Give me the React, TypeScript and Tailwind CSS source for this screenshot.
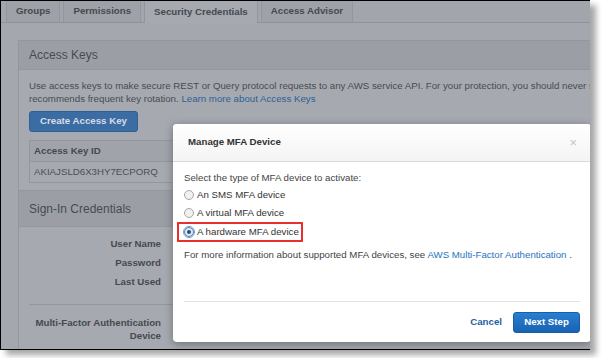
import { useState } from 'react'

const tabs = ['Groups', 'Permissions', 'Security Credentials', 'Access Advisor']
const opts = ['An SMS MFA device', 'A virtual MFA device', 'A hardware MFA device']

function Radio({ on }: { on: boolean }) {
  return (
    <span className={`w-[10px] h-[10px] rounded-full border flex items-center justify-center shrink-0 ${on ? 'border-[#5a7fa8] bg-[#dfe8f2] outline outline-1 outline-[#6aa0d8]' : 'border-[#a8a8a8] bg-[#f0f0f0]'}`}>
      {on && <span className="w-[4px] h-[4px] rounded-full bg-[#2b4e78]" />}
    </span>
  )
}

export default function App() {
  const [sel, setSel] = useState(2)

  return (
    <div className="w-[602px] h-[358px] bg-white relative overflow-hidden" style={{ fontFamily: '"Liberation Sans", Arial, sans-serif' }}>
      <div className="w-[590px] h-[350px] border-l border-t border-b border-black bg-[#a4a8ae] relative overflow-hidden shadow-[6px_5px_6px_rgba(0,0,0,0.35)] flex flex-col">
        {/* tabs */}
        <div className="h-[22px] flex items-end pl-[5px] gap-[3px] border-b border-[#8f9399] bg-[#a2a6ac]">
          {tabs.map((t, i) => (
            <div
              key={t}
              className={`h-[22px] px-[9px] flex items-center text-[9.7px] font-bold text-[#45494f] border-x border-t border-[#93979d] whitespace-nowrap ${i === 2 ? 'bg-[#a6aab0] -mb-px h-[23px]' : 'bg-[#9ea2a8]'}`}
            >
              {t}
            </div>
          ))}
        </div>

        <div className="flex-1 pl-[17px] pt-[17px]">
          <div className="border-l border-t border-[#94989e] bg-[#a6aab0] h-full">
            <div className="h-[29px] bg-[#9b9fa5] border-b border-[#94989e] flex items-center pl-[10px] text-[12px] text-[#474b51]">Access Keys</div>
            <div className="pl-[10px] pt-[9px] pb-[7px]">
              <p className="text-[9.7px] leading-[13px] text-[#474b51] whitespace-nowrap">
                Use access keys to make secure REST or Query protocol requests to any AWS service API. For your protection, you should never share your secret keys with anyone. As a best practice, we<br />
                recommends frequent key rotation. <span className="text-[#2f5f95]">Learn more about Access Keys</span>
              </p>
              <div className="mt-[6px] w-[109px] h-[21px] rounded-[3px] bg-[#3b6ca3] border border-[#325f92] flex items-center justify-center text-[9.7px] font-bold text-[#d7dde4]">Create Access Key</div>
              <div className="mt-[8px] border border-[#94989e] border-r-0">
                <div className="h-[21px] bg-[#a0a4aa] border-b border-[#94989e] flex items-center pl-[4px] text-[9.7px] font-bold text-[#45494f]">Access Key ID</div>
                <div className="h-[20px] flex items-center pl-[4px] text-[9.7px] text-[#4a4e54]">AKIAJSLD6X3HY7ECPORQ</div>
              </div>
            </div>
            <div className="h-[37px] bg-[#9b9fa5] border-y border-[#94989e] flex items-center pl-[10px] text-[12px] text-[#474b51]">Sign-In Credentials</div>
            <div className="pl-[10px] pt-[11px]">
              <div className="w-[132px] flex flex-col items-end gap-[7px] text-[9.7px] font-bold text-[#45494f] leading-[12px]">
                <span>User Name</span>
                <span>Password</span>
                <span>Last Used</span>
              </div>
              <div className="mt-[16px] border-t border-[#94989e]" />
              <div className="w-[132px] pt-[11px] text-right text-[9.7px] font-bold text-[#45494f] leading-[13px]">
                Multi-Factor Authentication<br />Device
              </div>
            </div>
          </div>
        </div>

        {/* modal */}
        <div className="absolute left-[172px] top-[123px] w-[418px] h-[218px] bg-white rounded-[4px] shadow-[0_2px_8px_rgba(0,0,0,0.35)] flex flex-col">
          <div className="h-[38px] border-b border-[#d9d9d9] bg-gradient-to-b from-white to-[#f4f4f4] rounded-t-[4px] flex items-center justify-between pl-[15px] pr-[14px]">
            <span className="text-[9.7px] font-bold text-[#333]">Manage MFA Device</span>
            <span className="text-[13px] text-[#c4c4c4] leading-none">×</span>
          </div>
          <div className="px-[11px] pt-[10px] flex-1 flex flex-col">
            <p className="text-[9.7px] text-[#444] leading-[12px]">Select the type of MFA device to activate:</p>
            <div className="mt-[5px] flex flex-col gap-[6px]">
              {opts.map((o, i) => (
                <label
                  key={o}
                  onClick={() => setSel(i)}
                  className={`flex items-center gap-[3px] text-[9.7px] text-[#333] leading-[12px] cursor-pointer whitespace-nowrap ${i === 2 ? 'w-[126px] -ml-[7px] pl-[5px] py-[2px] -my-[3px] border-2 border-[#e5302f]' : ''}`}
                >
                  <Radio on={sel === i} />
                  {o}
                </label>
              ))}
            </div>
            <p className="mt-[10px] text-[9.7px] text-[#444] leading-[12px] whitespace-nowrap">
              For more information about supported MFA devices, see <span className="text-[#2a73c0]">AWS Multi-Factor Authentication</span> .
            </p>
            <div className="mt-auto border-t border-[#e3e3e3]" />
            <div className="h-[40px] flex items-center justify-end gap-[11px]">
              <span className="text-[9.7px] font-bold text-[#1f5f9f]">Cancel</span>
              <button className="w-[67px] h-[21px] rounded-[3px] bg-gradient-to-b from-[#2a7fd0] to-[#1763b3] border border-[#1a5ea6] text-[9.7px] font-bold text-white">Next Step</button>
            </div>
          </div>
        </div>
      </div>
    </div>
  )
}
